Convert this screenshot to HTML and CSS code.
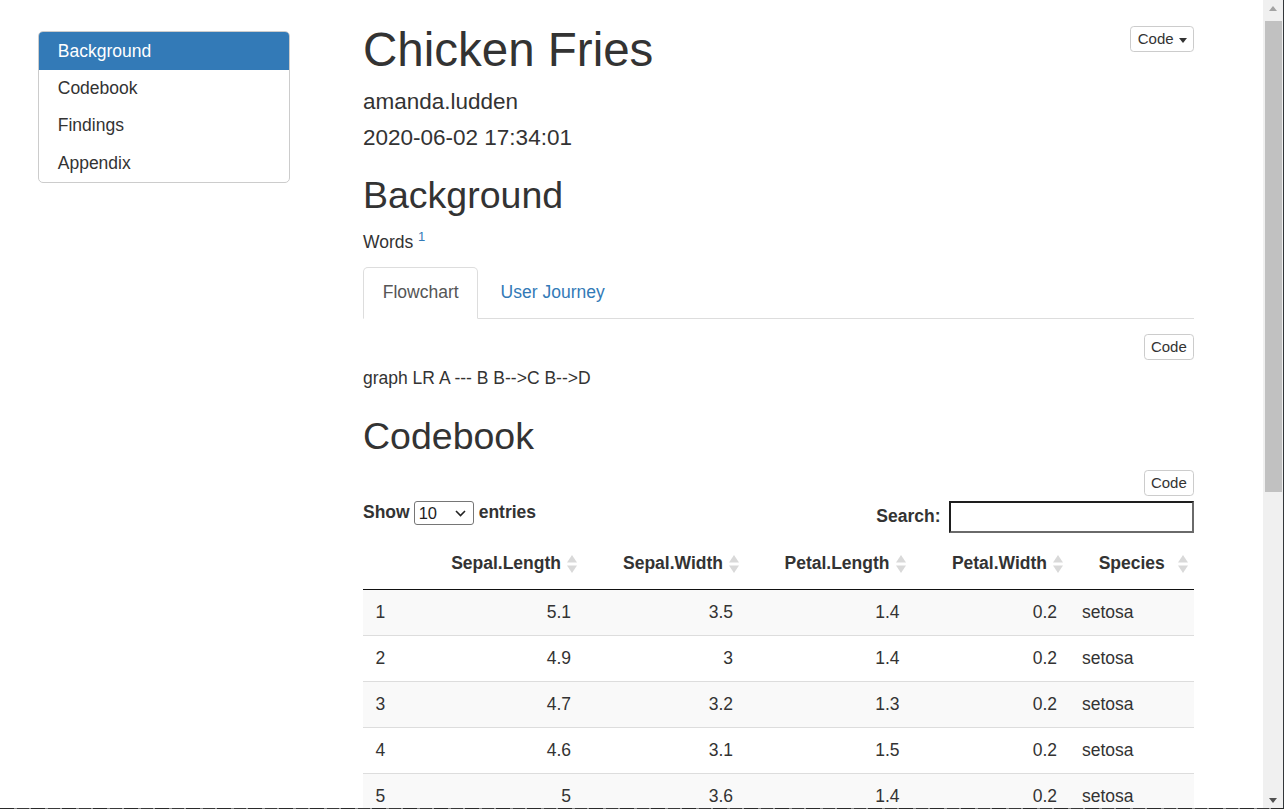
FILE: index.html
```html
<!DOCTYPE html>
<html lang="en">
<head>
<meta charset="utf-8">
<title>Chicken Fries</title>
<link rel="stylesheet" href="styles.css">
</head>
<body>
<div class="page">
  <nav class="toc">
    <ul class="toc-list">
      <li class="toc-item active">Background</li>
      <li class="toc-item">Codebook</li>
      <li class="toc-item">Findings</li>
      <li class="toc-item">Appendix</li>
    </ul>
  </nav>

  <main class="main">
    <header class="header">
      <div class="title-block">
        <h1 class="title">Chicken Fries</h1>
        <h4 class="author">amanda.ludden</h4>
        <h4 class="date">2020-06-02 17:34:01</h4>
      </div>
      <button class="btn btn-all" type="button">Code <span class="caret"></span></button>
    </header>

    <section class="section">
      <h2>Background</h2>
      <p class="words">Words <sup class="fn">1</sup></p>

      <ul class="tabs">
        <li class="tab active"><a class="tab-link">Flowchart</a></li>
        <li class="tab"><a class="tab-link">User Journey</a></li>
      </ul>

      <div class="tab-content">
        <div class="code-row code-row-first"><button class="btn" type="button">Code</button></div>
        <div class="graph">graph LR A --- B B--&gt;C B--&gt;D</div>
      </div>
    </section>

    <section class="section">
      <h2 class="h2-codebook">Codebook</h2>
      <div class="code-row"><button class="btn" type="button">Code</button></div>

      <div class="dt-wrapper">
        <div class="dt-controls">
          <label class="dt-length">Show
            <span class="select-wrap">
              <select class="dt-select"><option>10</option><option>25</option><option>50</option><option>100</option></select>
              <svg class="chev" width="11" height="7" viewBox="0 0 11 7"><path d="M1 1 L5.5 5.5 L10 1" fill="none" stroke="#222" stroke-width="1.6"/></svg>
            </span>
            entries</label>
          <label class="dt-filter">Search: <input class="dt-input" type="search"></label>
        </div>

        <table class="dt-table">
          <colgroup>
            <col class="c0"><col class="c1"><col class="c2"><col class="c3"><col class="c4"><col class="c5">
          </colgroup>
          <thead>
            <tr>
              <th class="th-blank"></th>
              <th class="num">Sepal.Length<svg class="sort" width="12" height="24" viewBox="0 0 12 24"><path d="M1 10.5 L6 3 L11 10.5 Z" fill="#d9d9d9"/><path d="M1 13.5 L6 21 L11 13.5 Z" fill="#d9d9d9"/></svg></th>
              <th class="num">Sepal.Width<svg class="sort" width="12" height="24" viewBox="0 0 12 24"><path d="M1 10.5 L6 3 L11 10.5 Z" fill="#d9d9d9"/><path d="M1 13.5 L6 21 L11 13.5 Z" fill="#d9d9d9"/></svg></th>
              <th class="num">Petal.Length<svg class="sort" width="12" height="24" viewBox="0 0 12 24"><path d="M1 10.5 L6 3 L11 10.5 Z" fill="#d9d9d9"/><path d="M1 13.5 L6 21 L11 13.5 Z" fill="#d9d9d9"/></svg></th>
              <th class="num">Petal.Width<svg class="sort" width="12" height="24" viewBox="0 0 12 24"><path d="M1 10.5 L6 3 L11 10.5 Z" fill="#d9d9d9"/><path d="M1 13.5 L6 21 L11 13.5 Z" fill="#d9d9d9"/></svg></th>
              <th class="txt">Species<svg class="sort" width="12" height="24" viewBox="0 0 12 24"><path d="M1 10.5 L6 3 L11 10.5 Z" fill="#d9d9d9"/><path d="M1 13.5 L6 21 L11 13.5 Z" fill="#d9d9d9"/></svg></th>
            </tr>
          </thead>
          <tbody>
            <tr><td>1</td><td class="num">5.1</td><td class="num">3.5</td><td class="num">1.4</td><td class="num">0.2</td><td>setosa</td></tr>
            <tr><td>2</td><td class="num">4.9</td><td class="num">3</td><td class="num">1.4</td><td class="num">0.2</td><td>setosa</td></tr>
            <tr><td>3</td><td class="num">4.7</td><td class="num">3.2</td><td class="num">1.3</td><td class="num">0.2</td><td>setosa</td></tr>
            <tr><td>4</td><td class="num">4.6</td><td class="num">3.1</td><td class="num">1.5</td><td class="num">0.2</td><td>setosa</td></tr>
            <tr><td>5</td><td class="num">5</td><td class="num">3.6</td><td class="num">1.4</td><td class="num">0.2</td><td>setosa</td></tr>
            <tr><td>6</td><td class="num">5.4</td><td class="num">3.9</td><td class="num">1.7</td><td class="num">0.4</td><td>setosa</td></tr>
            <tr><td>7</td><td class="num">4.6</td><td class="num">3.4</td><td class="num">1.4</td><td class="num">0.3</td><td>setosa</td></tr>
            <tr><td>8</td><td class="num">5</td><td class="num">3.4</td><td class="num">1.5</td><td class="num">0.2</td><td>setosa</td></tr>
            <tr><td>9</td><td class="num">4.4</td><td class="num">2.9</td><td class="num">1.4</td><td class="num">0.2</td><td>setosa</td></tr>
            <tr><td>10</td><td class="num">4.9</td><td class="num">3.1</td><td class="num">1.5</td><td class="num">0.1</td><td>setosa</td></tr>
          </tbody>
        </table>
      </div>
    </section>
  </main>
</div>

<div class="scrollbar" aria-hidden="true">
  <span class="sb-arrow sb-up"></span>
  <span class="sb-thumb"></span>
  <span class="sb-arrow sb-down"></span>
</div>
<div class="frame-right" aria-hidden="true"></div>
<div class="frame-bottom" aria-hidden="true"></div>
</body>
</html>
```

FILE: styles.css
```css
* { box-sizing: border-box; }

html, body {
  margin: 0;
  padding: 0;
  height: 100%;
  overflow: hidden;
  background: #fff;
}

body {
  font-family: "Liberation Sans", Arial, Helvetica, sans-serif;
  font-size: 17.5px;
  line-height: 25px;
  color: #333;
}

.page {
  display: grid;
  grid-template-columns: 252px 831px;
  column-gap: 73px;
  padding-left: 38px;
  align-items: start;
}

/* ---------- TOC ---------- */
.toc {
  margin-top: 31px;
  border: 1px solid #ccc;
  border-radius: 5px;
  overflow: hidden;
}
.toc-list { list-style: none; margin: 0; padding: 0; }
.toc-item {
  padding: 6.25px 18.75px;
  line-height: 25px;
  color: #333;
}
.toc-item.active {
  background: #337ab7;
  color: #fff;
  padding-top: 7.25px;
  padding-bottom: 5.25px;
}

/* ---------- header ---------- */
.header {
  display: flex;
  justify-content: space-between;
  align-items: flex-start;
  padding-top: 24px;
}
.title {
  margin: 0 0 13px;
  font-size: 47.5px;
  line-height: 52px;
  font-weight: 400;
}
.author, .date {
  font-size: 22.5px;
  line-height: 25px;
  font-weight: 400;
}
.author { margin: 0 0 11px; }
.date { margin: 0; }

.btn {
  font-family: inherit;
  font-size: 15px;
  line-height: 22px;
  padding: 1px 6.25px;
  border: 1px solid #ccc;
  border-radius: 3.75px;
  background: #fff;
  color: #333;
}
.btn-all { margin-top: 2px; }
.caret {
  display: inline-block;
  width: 0;
  height: 0;
  margin-left: 1px;
  vertical-align: middle;
  border-top: 5px solid #333;
  border-left: 4.5px solid transparent;
  border-right: 4.5px solid transparent;
}

/* ---------- sections ---------- */
h2 {
  margin: 25px 0 13.5px;
  font-size: 37.5px;
  line-height: 41.25px;
  font-weight: 400;
}
.words { margin: 0 0 12px; }
.fn { color: #337ab7; font-size: 13px; line-height: 0; }

.tabs {
  display: flex;
  list-style: none;
  margin: 0;
  padding: 0;
  border-bottom: 1px solid #ddd;
}
.tab { margin-bottom: -1px; margin-right: 2.5px; }
.tab-link {
  display: block;
  padding: 12.5px 18.75px;
  line-height: 25px;
  border: 1px solid transparent;
  border-radius: 5px 5px 0 0;
  color: #337ab7;
}
.tab.active .tab-link {
  color: #555;
  background: #fff;
  border-color: #ddd #ddd transparent;
}

.code-row { display: flex; justify-content: flex-end; }
.code-row-first { margin-top: 15px; }
.graph { margin-top: 6px; }
.h2-codebook { margin-top: 25px; margin-bottom: 12.5px; }

/* ---------- DataTable ---------- */
.dt-wrapper { margin-top: 5px; }
.dt-controls {
  display: flex;
  justify-content: space-between;
  align-items: flex-start;
}
.dt-length, .dt-filter {
  display: inline-flex;
  align-items: center;
  font-weight: 700;
}
.dt-length { height: 24px; }
.dt-filter { height: 32px; }

.select-wrap {
  position: relative;
  display: inline-block;
  margin: 0 5px 0 4px;
  height: 24px;
}
.dt-select {
  -webkit-appearance: none;
  appearance: none;
  width: 60px;
  height: 24px;
  padding: 0 0 0 4px;
  border: 1px solid #767676;
  border-radius: 3px;
  background: #fff;
  font-family: inherit;
  font-size: 16.5px;
  line-height: 22px;
  color: #222;
}
.chev {
  position: absolute;
  right: 8px;
  top: 9px;
  pointer-events: none;
}

.dt-input {
  width: 245px;
  height: 32px;
  margin-left: 8.5px;
  border-style: solid;
  border-width: 2px;
  border-color: #1e1e1e #6a6a6a #6a6a6a #1e1e1e;
  background: #fff;
  padding: 0 4px;
}

.dt-table {
  width: 831px;
  margin-top: 6px;
  table-layout: fixed;
  border-collapse: separate;
  border-spacing: 0;
}
.c0 { width: 60px; }
.c1 { width: 160.5px; }
.c2 { width: 162px; }
.c3 { width: 166.5px; }
.c4 { width: 157.5px; }
.c5 { width: 124.5px; }

.dt-table th {
  position: relative;
  padding: 12.5px 22.5px;
  line-height: 25px;
  font-weight: 700;
  text-align: center;
  border-bottom: 1px solid #111;
  white-space: nowrap;
}
.dt-table th.num { text-align: right; }
.sort {
  position: absolute;
  right: 5.5px;
  top: 50%;
  margin-top: -12px;
}

.dt-table td {
  padding: 10px 12.5px;
  line-height: 25px;
  border-top: 1px solid #ddd;
}
.dt-table tbody tr:first-child td { border-top: none; }
.dt-table tbody tr:nth-child(odd) { background: #f9f9f9; }
.dt-table td.num { text-align: right; }

/* ---------- window chrome (scrollbar + frame) ---------- */
.scrollbar {
  position: fixed;
  top: 0;
  bottom: 1px;
  right: 1px;
  width: 20px;
  background: #f0f0f0;
  display: flex;
  flex-direction: column;
  align-items: flex-start;
  padding-left: 2px;
}
.sb-arrow {
  display: block;
  width: 0;
  height: 0;
  margin-left: 4px;
  border-left: 4.5px solid transparent;
  border-right: 4.5px solid transparent;
}
.sb-up {
  margin-top: 6px;
  border-bottom: 5px solid #a3a3a3;
}
.sb-thumb {
  display: block;
  width: 17px;
  height: 471px;
  margin-top: 10px;
  background: #c1c1c1;
}
.sb-down {
  margin-top: auto;
  margin-bottom: 5px;
  border-top: 5px solid #505050;
}
.frame-right {
  position: fixed;
  top: 0;
  bottom: 0;
  right: 0;
  width: 1px;
  background: #33373a;
}
.frame-bottom {
  position: fixed;
  left: 0;
  right: 0;
  bottom: 0;
  height: 1px;
  background: repeating-linear-gradient(90deg, #2a2a2a 0 14px, #8a8a8a 14px 17px, #3a3a3a 17px 29px, #9a9a9a 29px 31px);
}
```
